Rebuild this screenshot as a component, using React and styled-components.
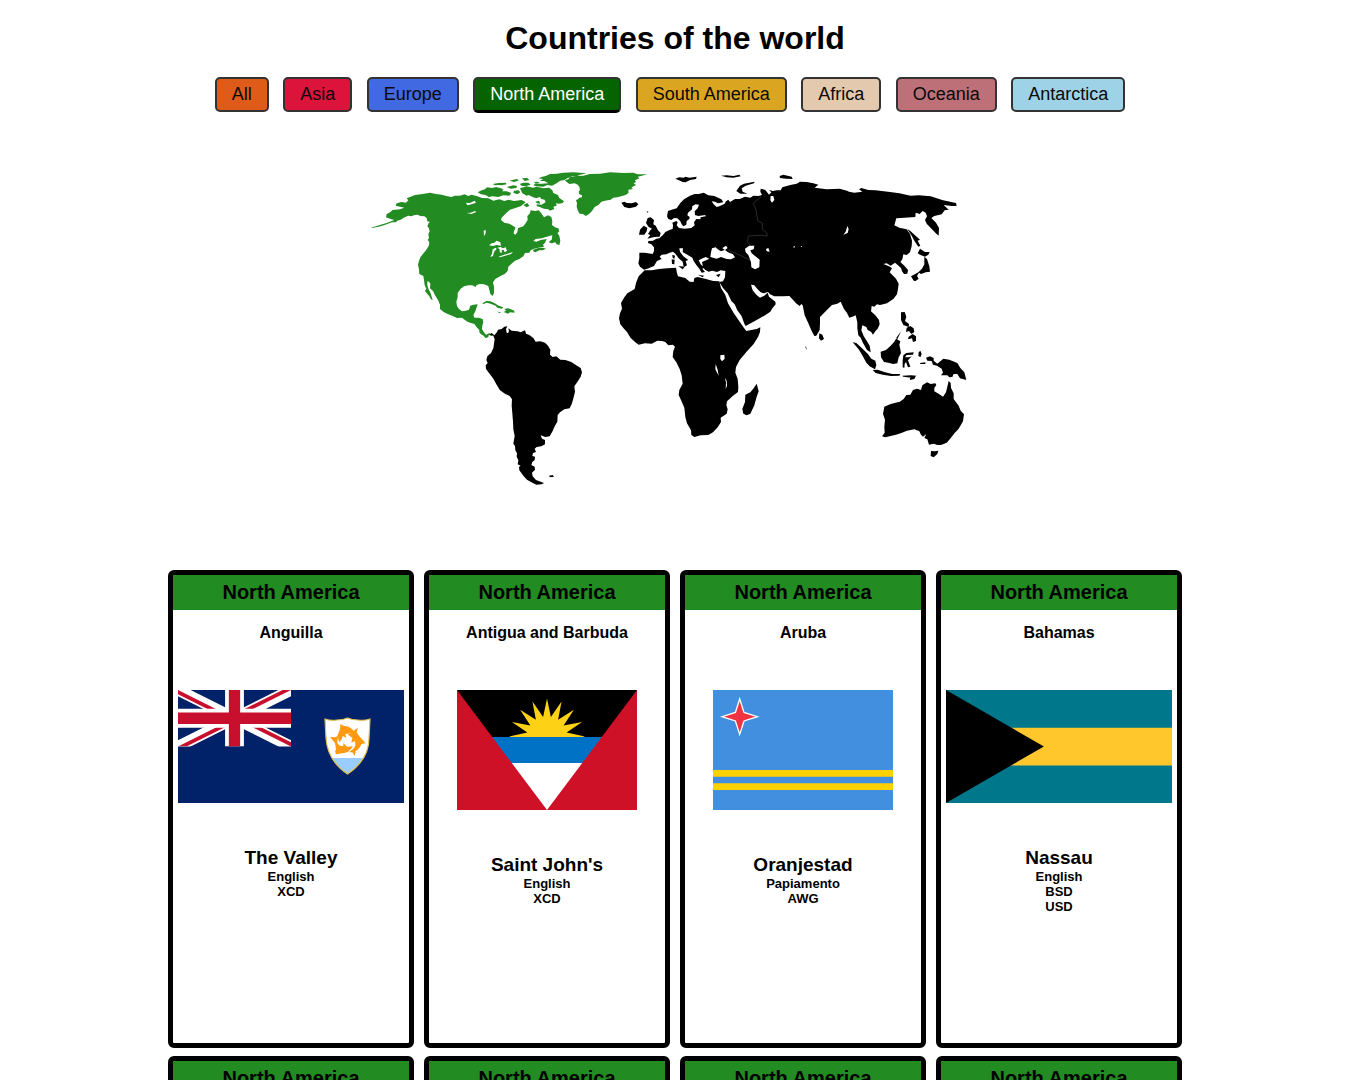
import React, { Fragment, useState } from 'react';
import styled, { createGlobalStyle } from 'styled-components';

const GlobalStyle = createGlobalStyle`
  * { box-sizing: border-box; }
  body {
    margin: 0;
    background: #fff;
    color: #000;
    font-family: "Liberation Sans", Arial, sans-serif;
    font-size: 16px;
  }
`;

const Page = styled.main`
  padding: 20px 8px;
  text-align: center;
`;

const Title = styled.h1`
  margin: 0 0 20px;
  font-size: 32px;
  line-height: 37px;
  font-weight: bold;
`;

const Filters = styled.nav`
  padding: 0;
`;

const FilterButton = styled.button`
  margin: 0 10px 0 0;
  padding: 5px 15px;
  font-family: inherit;
  font-size: 18px;
  line-height: 21px;
  color: ${(p) => (p.$active ? '#fff' : '#0a0a0a')};
  background: ${(p) => p.$color};
  border: 2px solid #333;
  border-bottom: ${(p) => (p.$active ? '3px solid #000' : '2px solid #333')};
  border-radius: 5px;
  cursor: pointer;
`;

const WorldMap = styled.svg`
  display: block;
  width: 620px;
  max-width: 100%;
  margin: 47px auto 70px;
`;

const CardGrid = styled.section`
  display: grid;
  grid-template-columns: repeat(auto-fill, 246px);
  justify-content: center;
  gap: 8px 10px;
  max-width: 1080px;
  margin: 0 auto;
`;

const Card = styled.article`
  min-height: 478px;
  border: 5px solid #000;
  border-radius: 6px;
  background: #fff;
`;

const Region = styled.h2`
  margin: 0;
  padding: 6px 0;
  font-size: 20px;
  line-height: 23px;
  background: #228b22;
`;

const CountryName = styled.h3`
  margin: 14px 0 48px;
  font-size: 16px;
  line-height: 18px;
`;

const Flag = styled.svg`
  display: block;
  width: ${(p) => p.$width}px;
  max-width: 100%;
  margin: 0 auto 44px;
`;

const Capital = styled.h3`
  margin: 0;
  font-size: 19px;
  line-height: 22px;
`;

const Detail = styled.p`
  margin: 0;
  font-size: 13px;
  line-height: 15px;
  font-weight: bold;
`;

const continents = [
  ['All', '#de5b19'],
  ['Asia', '#dc143c'],
  ['Europe', '#4169e1'],
  ['North America', '#066400'],
  ['South America', '#daa520'],
  ['Africa', '#e3c9ad'],
  ['Oceania', '#be7078'],
  ['Antarctica', '#9ed2e6'],
];

function Map() {
  return (
    <WorldMap viewBox="15 0 1860 1020" role="img" aria-label="World map">
      <g fill="#228b22">
        <path d="M33 203L62 194L80 189L103 180L92 177L78 172L80 162L88 158L98 150L120 148L133 143L120 140L107 137L110 130L124 126L138 128L145 121L140 115L152 110L165 105L188 102L210 98L228 102L245 104L262 109L275 111L284 107L300 107L314 103L325 108L334 104L350 108L366 114L385 115L400 122L418 118L433 123L446 119L462 123L485 120L497 127L482 139L466 144L450 149L438 160L425 173L423 180L433 188L448 191L460 198L467 203L462 213L461 221L466 224L472 217L474 204L482 202L490 199L498 188L503 180L502 168L509 161L512 151L526 153L536 151L544 160L552 172L564 166L574 171L577 184L576 195L585 202L595 205L598 214L590 222L576 226L560 230L545 235L527 237L520 243L529 245L542 240L560 237L555 248L549 254L552 260L535 263L520 267L512 271L508 278L495 279L490 289L478 297L465 302L456 310L445 320L443 333L434 342L420 349L406 357L399 367L402 381L402 398L398 408L391 402L388 390L385 378L372 373L359 372L350 375L347 381L337 376L325 376L312 379L302 386L293 399L293 412L289 425L291 438L297 447L306 454L317 452L327 449L331 437L341 434L353 433L350 442L346 454L340 466L343 473L356 473L368 477L370 487L367 496L366 507L371 516L378 524L387 520L397 523L396 528L386 525L385 532L376 534L371 527L363 523L358 517L358 510L350 502L343 492L330 488L320 484L314 479L306 473L291 474L278 468L263 462L251 456L240 447L240 434L234 420L225 406L219 393L210 385L211 371L207 365L202 364L202 376L205 386L212 400L218 421L213 418L208 409L199 398L195 393L199 386L194 376L192 360L190 348L178 342L177 328L174 315L177 302L182 290L193 277L201 266L207 256L208 246L203 240L207 234L205 223L209 214L206 203L202 199L206 189L210 186L202 184L200 174L193 169L181 168L173 164L164 165L154 169L145 167L134 172L122 179L112 182L108 187L96 187L80 193L62 199L37 204Z" />
        <path d="M353 97L365 91L375 88L381 82L397 84L408 81L423 85L431 89L426 94L440 94L454 99L448 107L430 106L415 111L399 109L386 111L377 105L363 103ZM398 72L415 69L437 68L440 73L425 76L416 75L405 76ZM448 62L470 57L477 61L463 66ZM440 81L460 76L471 78L469 84L452 86ZM462 92L476 91L481 97L472 103L460 98ZM479 72L490 68L505 68L512 74L499 78L486 78ZM486 55L502 54L508 60L494 63ZM480 85L500 79L519 83L530 80L551 85L568 83L577 91L580 99L594 105L598 114L612 124L608 129L597 131L588 130L590 137L580 140L583 147L570 152L565 148L552 146L541 142L530 138L530 133L544 134L557 127L554 119L544 117L540 111L528 115L516 110L506 105L500 107L487 100ZM526 125L537 122L541 131L531 130ZM490 135L502 129L508 137L500 142ZM535 55L547 50L557 48L570 42L590 41L610 38L640 37L680 40L660 44L650 49L637 49L622 55L613 60L601 62L586 72L576 77L562 75L550 80L530 79L520 76L525 72L545 71L565 70L553 63L540 63L549 57ZM522 66L532 65L540 69L527 71ZM577 219L585 208L598 228L601 243L598 255L590 253L586 247L575 250L566 247L576 238ZM520 269L535 264L549 263L558 266L548 271L538 271L526 277L519 273Z" />
        <path d="M614 61L625 58L629 52L648 48L670 47L690 42L720 41L750 37L790 39L820 38L833 43L862 43L840 49L833 50L838 55L825 61L828 66L821 70L828 75L818 80L814 84L820 87L805 89L806 98L798 104L789 107L772 112L760 113L752 119L735 122L724 125L716 134L704 141L696 153L687 162L677 168L669 162L659 161L654 153L650 140L651 130L648 120L654 118L658 113L666 112L666 106L658 103L656 95L660 90L658 80L653 74L644 70L628 72Z" />
        <path d="M367 430L379 423L391 424L403 429L416 437L430 442L425 446L412 443L407 437L392 431L380 428L370 432ZM433 447L445 445L463 452L463 458L450 457L444 461L431 456L438 452ZM412 455L422 456L420 460Z" />
      </g>
      <g fill="#fff">
        <path d="M318 128L330 129L344 122L348 128L334 133L322 136ZM320 159L332 158L345 153L349 156L334 162ZM371 212L377 210L377 220L372 229ZM387 256L396 249L402 249L410 242L421 247L423 257L410 255L399 258ZM398 268L407 263L410 266L402 276L399 288L391 291L396 281ZM412 263L422 261L429 265L437 262L441 272L434 277L431 270L425 269L426 278L419 277L419 268ZM416 290L430 285L459 276L453 282L431 289L419 292Z" />
      </g>
      <g transform="translate(330 450)">
        <path d="M58 74L65 69L73 76L81 66L84 59L95 57L103 50L112 49L108 57L110 68L114 70L117 63L115 55L125 62L143 64L152 67L165 61L168 71L178 75L190 84L197 95L211 94L225 98L234 107L241 119L240 134L248 141L259 139L271 149L286 150L304 156L321 167L332 174L336 187L332 200L322 216L313 229L315 245L311 262L306 280L299 295L283 298L270 307L263 315L262 335L254 349L248 363L239 379L226 381L212 376L216 386L225 390L225 403L214 409L200 411L194 416L198 426L189 429L187 438L195 440L194 450L187 456L184 465L194 470L195 479L186 488L188 499L198 510L222 519L215 523L199 524L183 516L171 509L160 497L148 481L147 471L152 467L143 463L145 451L140 440L141 430L136 421L135 408L130 401L134 378L130 358L129 335L127 310L125 287L126 268L119 258L105 251L90 241L79 223L70 206L57 189L48 177L47 166L53 159L49 150L52 139L63 129L70 115L72 101L74 88L70 77ZM237 497L248 495L252 500L240 502Z" />
      </g>
      <g transform="translate(750 0)">
        <path d="M88 278L104 278L128 282L132 273L132 262L124 253L114 249L115 243L129 242L139 236L148 235L159 225L166 216L180 209L188 207L189 196L187 188L199 183L203 187L200 196L207 204L224 206L244 204L254 196L252 187L259 177L271 178L272 172L287 169L286 165L265 168L255 165L254 154L263 145L267 134L257 133L247 138L246 148L234 158L232 166L239 171L238 177L230 183L229 194L220 199L215 193L211 184L202 175L192 174L184 180L175 177L171 169L174 153L185 149L200 145L211 129L222 118L240 107L254 102L266 102L281 98L295 106L313 108L334 118L340 127L324 130L315 125L305 124L311 133L320 141L330 138L344 131L348 124L355 119L360 126L375 117L389 117L405 110L421 113L430 107L445 108L456 105L451 95L452 86L466 90L477 104L484 97L477 90L489 93L500 91L512 91L517 82L541 75L560 71L570 65L590 66L610 70L625 74L614 83L650 88L689 86L711 92L717 95L733 98L757 95L747 88L754 84L775 90L797 91L840 96L868 100L902 107L926 106L962 109L999 121L1038 129L1040 138L1025 138L1001 135L1016 149L1004 151L995 163L973 168L964 174L978 188L987 204L986 227L976 218L966 208L950 191L945 180L951 169L947 158L938 153L929 162L917 158L916 171L883 173L859 175L853 196L868 203L890 208L900 222L906 242L905 259L900 277L890 285L880 283L877 298L871 306L883 317L894 330L892 341L882 342L876 334L873 324L864 316L855 308L842 317L830 310L820 312L837 319L846 325L839 337L858 356L866 371L864 387L861 403L850 417L831 430L810 435L801 433L793 440L785 438L783 454L796 466L807 480L809 493L803 506L796 514L789 524L783 515L773 510L769 501L757 496L754 511L761 528L770 542L779 557L782 577L771 570L759 549L752 533L745 526L742 505L742 487L737 466L727 470L718 473L711 459L702 447L692 425L682 431L666 435L650 451L630 471L630 490L629 510L619 527L613 528L604 511L595 490L584 466L578 436L574 432L569 438L558 430L553 424L538 408L519 409L493 409L480 403L474 396L461 400L452 397L443 388L432 375L423 374L428 391L439 404L450 413L463 407L473 398L477 410L496 425L497 433L486 446L481 455L463 467L440 480L407 498L403 491L395 469L382 451L374 433L364 423L353 400L339 384L328 366L339 364L345 352L346 333L332 331L321 336L307 332L296 335L285 329L279 321L276 306L290 300L298 296L287 291L275 296L266 301L272 313L283 323L277 326L285 336L275 338L268 326L259 315L251 303L247 293L232 284L218 276L219 265L208 265L210 275L220 289L235 300L227 303L231 316L221 322L218 305L206 295L196 281L189 275L179 278L169 283L155 284L149 290L155 297L141 303L132 318L112 326L102 329L90 320L85 310L88 295Z" />
        <path d="M34 128L44 125L50 129L65 130L78 126L85 133L78 140L58 145L43 141ZM113 174L122 172L132 180L130 193L137 197L144 211L152 219L149 230L132 231L112 236L121 225L114 222L121 211L126 206L116 201L108 189ZM90 209L101 197L112 203L110 214L103 224L87 224ZM110 154L116 155L112 158ZM196 56L208 52L221 53L226 50L238 53L260 50L258 57L240 60L227 67L218 66L207 61ZM333 47L350 46L371 48L388 44L392 49L370 53L350 52ZM379 93L390 77L402 71L434 65L432 70L407 77L395 85L398 95L412 101L391 101ZM509 48L520 44L545 50L548 57L528 56L510 54ZM187 284L195 287L193 296L188 294ZM185 298L194 299L193 313L186 312ZM205 318L224 320L218 328ZM264 344L282 347L278 352ZM318 345L332 341L326 352Z" />
        <path d="M892 207L901 213L921 231L930 239L923 242L931 257L925 260L913 242L905 227ZM930 266L945 276L959 276L955 284L945 290L930 284L923 280ZM943 290L951 297L958 319L960 335L947 337L933 342L927 338L921 348L926 356L917 363L911 362L903 349L917 341L925 337L936 326L943 313ZM628 520L637 524L642 537L633 542L627 535ZM585 558L589 562L590 571Z" />
        <path d="M728 547L739 549L756 565L773 581L784 596L796 602L799 616L795 628L779 619L769 608L757 586L746 568ZM788 630L803 629L825 637L847 642L871 642L868 647L843 648L818 644L797 639ZM877 647L903 646L920 647L904 653L880 650ZM900 654L918 647L913 657L900 660ZM812 575L828 570L842 557L853 545L858 536L871 544L868 554L871 568L873 579L866 592L862 610L849 612L835 608L822 606L813 592ZM859 533L876 510L874 512L861 540ZM873 457L884 456L889 470L885 483L897 492L896 501L880 495L873 480ZM890 503L901 498L911 505L913 516L904 522L897 513L888 516ZM896 530L908 522L918 529L918 543L909 546L906 535L894 538ZM880 586L889 579L911 577L909 584L890 585L885 592L897 592L905 589L894 601L901 620L894 622L888 606L884 612L883 624L878 622L878 602ZM926 577L931 572L935 582L931 592L925 587ZM930 609L946 607L946 612L931 612ZM948 593L960 589L971 594L971 602L982 611L1000 596L1018 599L1042 609L1051 624L1063 637L1069 660L1050 655L1042 642L1031 642L1027 651L1018 652L1012 646L993 646L999 638L995 626L981 617L969 614L965 603L952 602Z" />
        <path d="M823 740L842 732L869 725L881 717L889 705L901 704L909 690L921 686L933 690L937 676L951 667L962 672L976 670L979 675L973 684L973 694L988 703L999 710L1008 697L1012 680L1016 663L1022 669L1023 684L1031 700L1031 717L1046 737L1052 752L1062 763L1059 784L1046 806L1034 819L1018 839L1010 848L993 855L982 855L971 851L957 854L952 838L943 834L949 822L939 830L933 824L928 814L913 808L891 812L874 819L858 824L842 828L826 832L816 829L824 818L823 800L825 779L819 762ZM963 873L975 874L985 872L982 882L971 892L962 888Z" />
        <path d="M104 331L125 331L147 327L172 325L198 323L201 340L204 349L226 354L239 365L251 366L253 354L263 351L285 356L310 363L328 364L333 384L346 405L354 430L371 459L389 485L402 504L409 513L424 510L440 507L451 502L450 516L444 531L431 552L411 574L389 600L378 621L376 638L383 656L385 681L384 696L369 707L351 724L349 736L353 748L350 761L332 773L333 786L323 802L309 817L295 825L272 826L253 831L244 825L243 811L231 790L226 771L223 743L213 720L206 705L208 690L218 671L215 646L209 627L199 607L188 591L190 573L195 560L189 554L175 556L166 546L156 543L142 542L125 551L105 550L86 554L76 547L62 534L51 516L42 506L31 493L27 475L30 460L36 446L33 429L43 412L52 400L74 387L78 369L86 349ZM440 671L446 694L440 710L433 736L421 761L410 766L400 761L397 747L405 726L406 704L421 697L431 685Z" />
      </g>
      <g transform="translate(750 0)" fill="#fff">
        <path d="M301 291L303 277L306 265L317 262L323 268L333 274L344 270L337 264L348 257L353 264L345 270L354 277L369 283L375 292L363 298L350 297L333 291L320 296ZM405 266L418 257L433 257L431 268L421 271L425 280L439 291L449 299L448 322L435 328L424 322L423 307L415 285L407 277ZM468 267L475 264L479 275L470 274ZM712 198L716 207L713 219L700 224L707 215ZM550 260L556 257L552 265ZM572 258L577 258L574 261ZM331 586L343 584L344 596L336 604L331 597ZM482 108L490 108L493 120L486 128L481 121Z" />
        <path d="M317 612L316 628L326 647L323 629ZM345 653L348 668L347 687L351 677L350 662Z" />
      </g>
      <g transform="translate(750 0)" fill="none" stroke="#555" strokeWidth="1.5">
        <path d="M453 110L430 130L438 149L443 182L457 190L457 207L470 218L472 228L450 226L415 228L412 245L421 257M353 270L390 285L421 301" />
      </g>
    </WorldMap>
  );
}

const shieldOutline =
  'M147 29Q153 31 159 30Q165 30 169.500 28Q174 30 180 30Q186 31 192 29L191 48C191 63 183 75 169.500 84C156 75 149 63 148 48Z';

function AnguillaFlag() {
  return (
    <Flag $width={226} viewBox="0 0 226 113" role="img" aria-label="Flag of Anguilla">
      <clipPath id="saltire">
        <path d="M30,15h30v15zv15h-30zh-30v-15zv-15h30z" />
      </clipPath>
      <clipPath id="shield">
        <path d={shieldOutline} />
      </clipPath>
      <path fill="#012169" d="M0 0h226v113H0z" />
      <svg width="113" height="56.5" viewBox="0 0 60 30">
        <path d="M0,0L60,30M60,0L0,30" stroke="#fff" strokeWidth="6" />
        <path d="M0,0L60,30M60,0L0,30" clipPath="url(#saltire)" stroke="#c8102e" strokeWidth="4" />
        <path d="M30,0V30M0,15H60" stroke="#fff" strokeWidth="10" />
        <path d="M30,0V30M0,15H60" stroke="#c8102e" strokeWidth="6" />
      </svg>
      <g clipPath="url(#shield)">
        <path fill="#fff" d="M145 26h50v60h-50z" />
        <path fill="#9cf" d="M145 68h50v20h-50z" />
      </g>
      <path fill="none" stroke="#e0c050" strokeWidth="1.2" d={shieldOutline} />
      <g transform="scale(.33333) translate(-54 -390)" fill="#ff9a10">
        <path d="M538 547L532 527L540 508L541 492L552 498Q570 498 581 512L594 503L590 517L597 527L580 523Q565 518 556 522L559 533L548 528Q546 540 538 547Z" />
        <path d="M563 523Q588 514 602 533L617 550L604 552Q600 566 587 573L584 588L577 577L567 577L580 566Q590 556 584 543L574 548L577 534Z" />
        <path d="M579 559Q566 580 547 580L529 583Q523 577 528 568L525 549L510 531L525 532L534 528L532 548Q538 560 550 558L550 549L561 560Z" />
      </g>
    </Flag>
  );
}

const sunPoints = Array.from({ length: 32 }, (_, i) => {
  const radius = i % 2 ? 20 : 38;
  const angle = (i * Math.PI) / 16;
  return `${90 + radius * Math.cos(angle)},${46.5 + radius * Math.sin(angle)}`;
}).join(' ');

function AntiguaFlag() {
  return (
    <Flag $width={180} viewBox="0 0 180 120" role="img" aria-label="Flag of Antigua and Barbuda">
      <clipPath id="wedge">
        <path d="M0 0H180L90 120Z" />
      </clipPath>
      <path fill="#ce1126" d="M0 0h180v120H0z" />
      <g clipPath="url(#wedge)">
        <path d="M0 0h180v47H0z" />
        <polygon points={sunPoints} fill="#fcd116" />
        <path fill="#0072c6" d="M0 47h180v26H0z" />
        <path fill="#fff" d="M0 73h180v47H0z" />
      </g>
    </Flag>
  );
}

function ArubaFlag() {
  return (
    <Flag $width={180} viewBox="0 0 180 120" role="img" aria-label="Flag of Aruba">
      <path fill="#418fde" d="M0 0h180v120H0z" />
      <path fill="#ffd100" d="M0 80h180v6.700H0zM0 93.300h180v6.700H0z" />
      <path
        fill="#ef3340"
        stroke="#fff"
        strokeWidth="1.3"
        d="M26.700 9L31 22.400L44.400 26.700L31 31L26.700 44.400L22.400 31L9 26.700L22.400 22.400Z"
      />
    </Flag>
  );
}

function BahamasFlag() {
  return (
    <Flag $width={226} viewBox="0 0 226 113" role="img" aria-label="Flag of the Bahamas">
      <path fill="#00778b" d="M0 0h226v113H0z" />
      <path fill="#ffc72c" d="M0 37.700h226v37.700H0z" />
      <path d="M0 0L97.900 56.500L0 113Z" />
    </Flag>
  );
}

const countries = [
  { name: 'Anguilla', FlagArt: AnguillaFlag, capital: 'The Valley', details: ['English', 'XCD'] },
  { name: 'Antigua and Barbuda', FlagArt: AntiguaFlag, capital: "Saint John's", details: ['English', 'XCD'] },
  { name: 'Aruba', FlagArt: ArubaFlag, capital: 'Oranjestad', details: ['Papiamento', 'AWG'] },
  { name: 'Bahamas', FlagArt: BahamasFlag, capital: 'Nassau', details: ['English', 'BSD', 'USD'] },
  {},
  {},
  {},
  {},
];

function CountryCard({ name, FlagArt, capital, details }) {
  return (
    <Card>
      <Region>North America</Region>
      {name && (
        <>
          <CountryName>{name}</CountryName>
          <FlagArt />
          <Capital>{capital}</Capital>
          {details.map((text) => (
            <Detail key={text}>{text}</Detail>
          ))}
        </>
      )}
    </Card>
  );
}

export default function App() {
  const [selected, setSelected] = useState('North America');
  return (
    <Page>
      <GlobalStyle />
      <Title>Countries of the world</Title>
      <Filters aria-label="Continents">
        {continents.map(([label, color]) => (
          <Fragment key={label}>
            <FilterButton
              type="button"
              $color={color}
              $active={selected === label}
              aria-pressed={selected === label}
              onClick={() => setSelected(label)}
            >
              {label}
            </FilterButton>{' '}
          </Fragment>
        ))}
      </Filters>
      <Map />
      <CardGrid>
        {countries.map((country, i) => (
          <CountryCard key={i} {...country} />
        ))}
      </CardGrid>
    </Page>
  );
}
